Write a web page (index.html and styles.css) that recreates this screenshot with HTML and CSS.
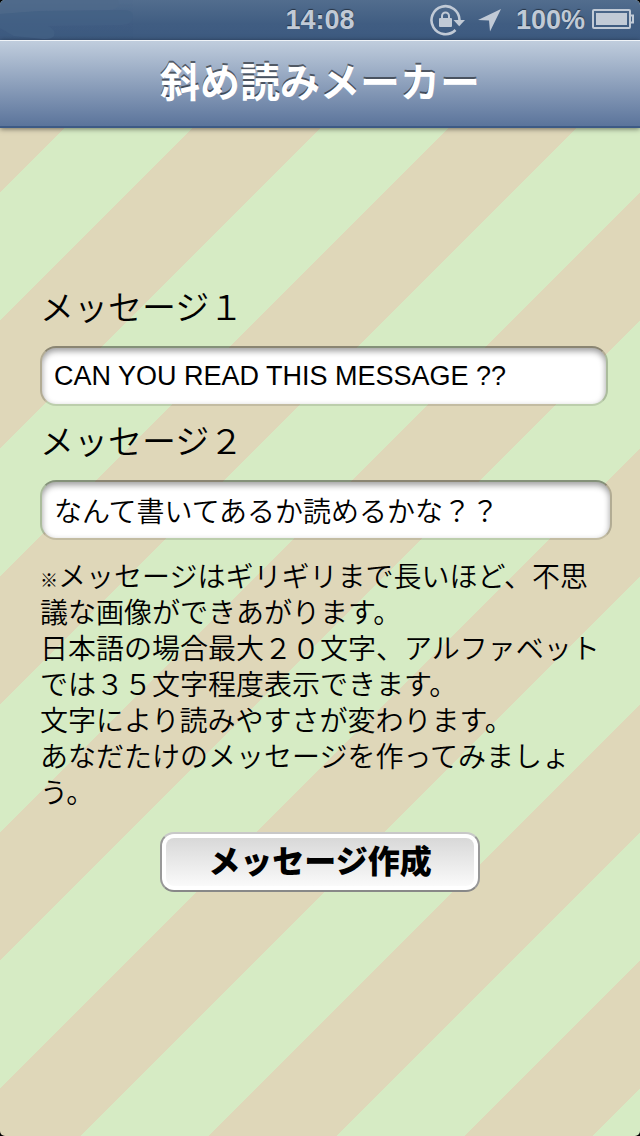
FILE: index.html
```html
<!DOCTYPE html>
<html lang="ja">
  <head>
    <meta charset="utf-8">
    <title>斜め読みメーカー</title>
    <link rel="stylesheet" href="styles.css">
  </head>
  <body>
    <div class="screen">
      <div class="status-bar">
        <svg class="carrier" width="140" height="40" viewBox="0 0 140 40">
          <path d="M0 14 L40 11 L110 10 Q122 8 118 0 L0 0 Z" fill="#4f6a8b" />
          <path d="M0 14 L40 11 L124 10 Q133 10 133 17 Q133 24 122 25 L48 26 Q56 30 54 36 Q52 39 44 39 L14 36 L0 28 Z" fill="#446185" />
        </svg>
        <span class="time">14:08</span>
        <div class="indicators">
          <svg class="rotation-lock" width="35" height="32" viewBox="0 0 35 32">
            <path d="M25.500 26 A14 14 0 1 1 29.500 16" fill="none" stroke="currentColor" stroke-width="2.600" />
            <path d="M23.500 16 H35 L29.200 22.300 Z" fill="currentColor" />
            <rect x="9" y="14" width="13" height="9" rx="1" fill="currentColor" />
            <path d="M12 15 V12 a3.500 3.500 0 0 1 7 0 V15" fill="none" stroke="currentColor" stroke-width="2" />
          </svg>
          <svg class="location" width="24" height="24" viewBox="0 0 24 24">
            <path d="M23 1 L12 23.500 L11 12.500 L0 12 Z" fill="currentColor" />
          </svg>
          <span class="percent">100%</span>
          <svg class="battery" width="43" height="22" viewBox="0 0 43 22">
            <rect x="1" y="1" width="37" height="18" rx="1" fill="none" stroke="currentColor" stroke-width="2" />
            <rect x="4" y="4" width="31" height="12" fill="currentColor" />
            <path d="M38 6.500 H41 V13.500 H38" fill="none" stroke="currentColor" stroke-width="2" />
          </svg>
        </div>
      </div>
      <header class="nav-bar">
        <h1>斜め読みメーカー</h1>
      </header>
      <form class="container">
        <label for="message1">メッセージ１</label>
        <input class="input-field latin" id="message1" type="text" value="CAN YOU READ THIS MESSAGE ??">
        <label for="message2">メッセージ２</label>
        <input class="input-field" id="message2" type="text" value="なんて書いてあるか読めるかな？？">
        <p class="desc"><span class="mark">※</span>メッセージはギリギリまで長いほど、不思議な画像ができあがります。<br>
          日本語の場合最大２０文字、アルファベットでは３５文字程度表示できます。<br>
          文字により読みやすさが変わります。<br>
          あなだたけのメッセージを作ってみましょう。</p>
        <button class="create" type="button"><span>メッセージ作成</span></button>
      </form>
    </div>
  </body>
</html>
```
FILE: styles.css
```css
* {
  box-sizing: border-box;
}
html {
  background: #000;
}
body {
  margin: 0;
  font-family: "Liberation Sans", "Noto Sans CJK JP", sans-serif;
  color: #000;
}
.screen {
  min-height: 100vh;
  border-radius: 5px;
  overflow: hidden;
  /* diagonal stripes, one tile holds two pairs */
  background-image: linear-gradient(
    135deg,
    #dfd7b9 25%,
    #d6ebc4 25%,
    #d6ebc4 50%,
    #dfd7b9 50%,
    #dfd7b9 75%,
    #d6ebc4 75%
  );
  background-size: 256px 256px;
  background-position: 64px 0;
}
.status-bar {
  display: grid;
  grid-template-columns: 1fr auto 1fr;
  align-items: center;
  height: 40px;
  background: linear-gradient(#526d8e, #405d82 60%, #3d5a80);
  color: #c1cad6;
  font-size: 27px;
  font-weight: bold;
  text-shadow: 0 -1px 1px rgba(0, 0, 0, 0.5);
}
.carrier {
  opacity: 0.7;
}
.indicators {
  display: flex;
  align-items: center;
  justify-content: flex-end;
  padding-right: 5px;
}
.rotation-lock {
  margin-right: 13px;
}
.location {
  margin-right: 14px;
}
.percent {
  margin-right: 7px;
}
.nav-bar {
  height: 88px;
  border-top: 1px solid #f0f4f8;
  border-bottom: 2px solid #3d5a85;
  background: linear-gradient(#c0cddd, #5b749b);
  box-shadow: 0 1px 5px rgba(0, 0, 0, 0.5);
}
h1 {
  margin: 0;
  font-size: 40px;
  line-height: 84px;
  text-align: center;
  color: #fff;
  text-shadow: 0 -2px 0 rgba(0, 0, 0, 0.5);
}
.container {
  display: flex;
  flex-direction: column;
  padding: 156px 28px 40px 40px;
}
label {
  font-size: 34px;
  font-weight: 350;
  line-height: 48px;
  margin-bottom: 14px;
}
.input-field {
  height: 60px;
  margin: 0 0 12px;
  padding: 0 12px;
  border: 2px solid rgba(0, 0, 0, 0.2);
  border-top-color: rgba(0, 0, 0, 0.38);
  border-bottom-color: rgba(0, 0, 0, 0.12);
  border-radius: 16px;
  background: #fff;
  background-clip: padding-box;
  box-shadow: inset 0 3px 6px rgba(0, 0, 0, 0.4);
  outline: none;
  font-family: inherit;
  font-size: 28px;
  font-weight: 350;
  color: #000;
}
.latin {
  margin-right: 4px;
  font-size: 27px;
}
.desc {
  margin: 8px 0 20px;
  font-size: 28px;
  font-weight: 350;
  line-height: 36px;
}
.mark {
  font-size: 18px;
  font-weight: 900;
  line-height: 18px;
}
.create {
  align-self: center;
  width: 320px;
  height: 60px;
  margin-right: 12px;
  padding: 4px;
  border: 2px solid #999;
  border-top-color: #c8c8c8;
  border-bottom-color: #888;
  border-radius: 14px;
  background: #fff;
  font-family: inherit;
  font-size: 32px;
  font-weight: 900;
  color: #000;
  cursor: pointer;
}
.create span {
  display: block;
  border-radius: 8px;
  background: linear-gradient(#d8d8d8, #fafafa);
  line-height: 48px;
}
```
